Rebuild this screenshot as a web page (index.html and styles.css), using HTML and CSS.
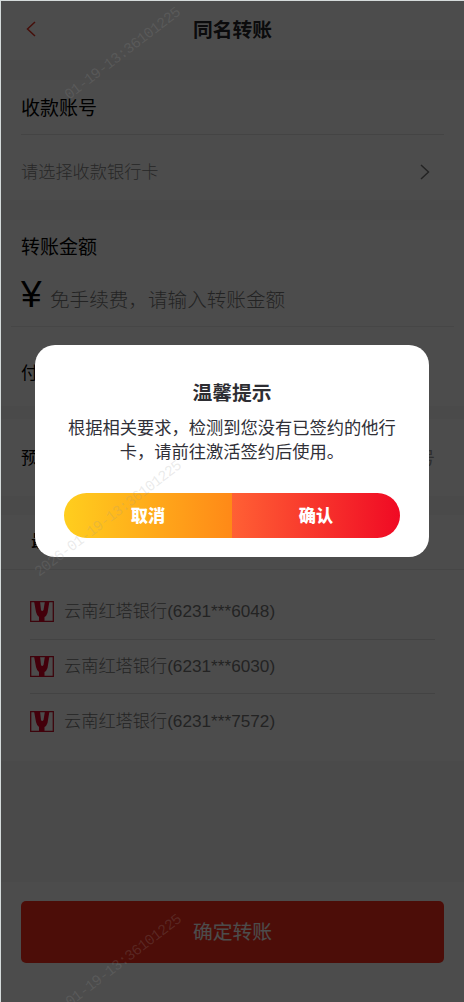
FILE: index.html
```
<!DOCTYPE html>
<html lang="zh-CN">
<head>
<meta charset="utf-8">
<title>同名转账</title>
<link rel="stylesheet" href="styles.css">
</head>
<body>
<div class="page">
  <header class="header">
    <svg class="back" viewBox="0 0 10 16"><path d="M9 1 1.5 8 9 15"/></svg>
    <h1 class="header-title">同名转账</h1>
  </header>
  <section class="card payee">
    <div class="card-head">收款账号</div>
    <div class="select"><span>请选择收款银行卡</span><svg class="arrow" viewBox="0 0 10 16"><path d="M1 1 8.5 8 1 15"/></svg></div>
  </section>
  <section class="card amount">
    <div class="amount-head">转账金额</div>
    <div class="amount-row"><span class="yen">¥</span><span class="placeholder">免手续费，请输入转账金额</span></div>
    <div class="row pay">付</div>
  </section>
  <section class="card row reserve"><span>预</span><span class="hint">号</span></section>
  <section class="card recent">
    <div class="recent-head"><span>最</span></div>
    <ul class="banks">
      <li class="bank"><svg class="logo" viewBox="0 0 24 21"><path class="frame" d="M.7.7H23.300V20.300H.7Z"/><path class="mark" d="M4 0H10L11 9Q12 11 13.500 9L15 0H19.500L17.500 12Q16.500 15 14.500 16V21H9V16Q7 15 6 11Z"/></svg><span class="name">云南红塔银行(6231***6048)</span></li>
      <li class="bank"><svg class="logo" viewBox="0 0 24 21"><path class="frame" d="M.7.7H23.300V20.300H.7Z"/><path class="mark" d="M4 0H10L11 9Q12 11 13.500 9L15 0H19.500L17.500 12Q16.500 15 14.500 16V21H9V16Q7 15 6 11Z"/></svg><span class="name">云南红塔银行(6231***6030)</span></li>
      <li class="bank"><svg class="logo" viewBox="0 0 24 21"><path class="frame" d="M.7.7H23.300V20.300H.7Z"/><path class="mark" d="M4 0H10L11 9Q12 11 13.500 9L15 0H19.500L17.500 12Q16.500 15 14.500 16V21H9V16Q7 15 6 11Z"/></svg><span class="name">云南红塔银行(6231***7572)</span></li>
    </ul>
  </section>
  <footer class="footer"><button class="submit">确定转账</button></footer>
</div>
<div class="overlay">
  <div class="modal">
    <h2 class="modal-title">温馨提示</h2>
    <p class="modal-text">根据相关要求，检测到您没有已签约的他行卡，请前往激活签约后使用。</p>
    <div class="actions"><button class="cancel">取消</button><button class="confirm">确认</button></div>
  </div>
</div>
<svg class="watermark" viewBox="0 0 464 1002">
  <text transform="translate(69 100) rotate(-37.500)" textLength="142">01-19-13:36101225</text>
  <text transform="translate(39 577) rotate(-37.500)" textLength="181">2026-01-19-13:36101225</text>
  <text transform="translate(70 1007) rotate(-37.500)" textLength="142">01-19-13:36101225</text>
</svg>
</body>
</html>
```
FILE: styles.css
```
* { box-sizing: border-box; }
body {
  margin: 0;
  width: 464px;
  height: 1002px;
  overflow: hidden;
  position: relative;
  background: #d5dbdb;
  font-family: "Liberation Sans", "Noto Sans CJK SC", sans-serif;
  font-size: 17.2px;
  font-weight: 400;
  color: #000;
}
button { border: 0; padding: 0; font-family: inherit; }
h1, h2, p, ul { margin: 0; padding: 0; }
.page {
  height: 1001px;
  margin: 1px 0 0 1px;
  display: flex;
  flex-direction: column;
  background: #f9f9f9;
}
.header {
  height: 59px;
  margin-bottom: 20px;
  display: grid;
  grid-template-columns: 60px 1fr 60px;
  align-items: center;
  background: #fff;
}
.back { width: 10px; height: 16px; margin: 0 0 3px 25px; fill: none; stroke: #e83222; stroke-width: 1.5; }
.header-title { font-size: 19.8px; font-weight: 700; text-align: center; line-height: 59px; color: #25252a; }
.card { background: #fff; }
.payee { height: 120px; padding: 0 20px; margin-bottom: 20px; }
.card-head { height: 55px; line-height: 57px; font-size: 19px; border-bottom: 1px solid #e5e5e5; }
.select { height: 65px; padding: 8px 14px 0 0; display: flex; align-items: center; justify-content: space-between; color: #858585; }
.select span { margin-bottom: 2px; font-weight: 300; }
.arrow { width: 10px; height: 16px; fill: none; stroke: #777; stroke-width: 1.5; }
.amount { height: 186px; margin-bottom: 13px; }
.amount-head { height: 53px; padding: 0 20px; line-height: 56px; font-size: 19px; }
.amount-row { height: 54px; margin: 0 10px; padding: 0 10px; display: flex; gap: 9px; border-bottom: 1px solid #e9e9e9; }
.yen { width: 20px; font-size: 37px; line-height: 43px; }
.placeholder { font-size: 19.6px; font-weight: 300; line-height: 55px; color: #777; }
.row { padding: 0 20px; }
.pay { line-height: 92px; }
.reserve { height: 77px; padding-right: 29px; margin-bottom: 19px; display: flex; justify-content: space-between; line-height: 78px; }
.hint { color: #999; }
.recent { height: 246px; }
.recent-head { height: 55px; padding: 0 30px; line-height: 52px; border-bottom: 1px solid #e9e9e9; font-weight: 500; }
.banks { list-style: none; padding: 15px 29px 0; }
.bank { height: 54.5px; display: flex; align-items: center; gap: 10px; border-bottom: 1px solid #e0e0e0; color: #777; }
.bank:last-child { border-bottom: 0; }
.name { margin-bottom: 4px; font-weight: 300; }
.logo { width: 24px; height: 21px; }
.frame { fill: none; stroke: #ca1028; stroke-width: 1.3; }
.mark { fill: #e00025; }
.footer { margin-top: auto; height: 120px; padding: 19px 20px 0; background: #fff; }
.submit { display: block; width: 423px; height: 62px; padding-bottom: 4px; border-radius: 5px; background: #ff2e1c; color: #fff; font-size: 19.8px; font-weight: 400; }
.overlay {
  position: absolute;
  inset: 1px 0 0 1px;
  background: rgba(0, 0, 0, .7);
}
.modal {
  width: 394px;
  height: 212px;
  margin: 344px 0 0 34px;
  padding: 34px 29px 0;
  border-radius: 20px;
  background: #fff;
  text-align: center;
}
.modal-title { font-size: 19.8px; line-height: 29px; font-weight: 700; color: #2d2d32; }
.modal-text { margin: 8px 0 29px; font-size: 17.25px; line-height: 24px; color: #303038; }
.actions { display: grid; grid-template-columns: 168px 168px; height: 45px; border-radius: 23px; overflow: hidden; }
.actions button { padding-bottom: 2px; color: #fff; font-size: 17.2px; font-weight: 900; }
.actions .cancel { background: linear-gradient(90deg, #ffce1e, #ff8917); }
.actions .confirm { background: linear-gradient(90deg, #ff6034, #f00a24); }
.watermark { position: absolute; inset: 0; width: 464px; height: 1002px; pointer-events: none; }
.watermark text { font: 15px "Liberation Mono", monospace; fill: rgba(150, 150, 150, .2); }
```
